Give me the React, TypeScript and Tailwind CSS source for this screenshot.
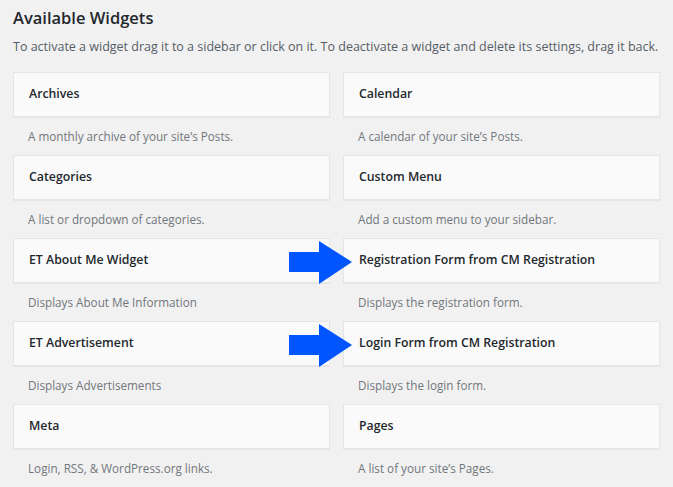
import React from "react";

type Widget = {
  title: string;
  desc: string;
  arrow?: boolean;
};

const widgets: Widget[] = [
  { title: "Archives", desc: "A monthly archive of your site’s Posts." },
  { title: "Calendar", desc: "A calendar of your site’s Posts." },
  { title: "Categories", desc: "A list or dropdown of categories." },
  { title: "Custom Menu", desc: "Add a custom menu to your sidebar." },
  { title: "ET About Me Widget", desc: "Displays About Me Information" },
  {
    title: "Registration Form from CM Registration",
    desc: "Displays the registration form.",
    arrow: true,
  },
  { title: "ET Advertisement", desc: "Displays Advertisements" },
  {
    title: "Login Form from CM Registration",
    desc: "Displays the login form.",
    arrow: true,
  },
  { title: "Meta", desc: "Login, RSS, & WordPress.org links." },
  { title: "Pages", desc: "A list of your site’s Pages." },
];

const Arrow = () => (
  <svg
    className="absolute left-[-54px] top-[3px]"
    width="64"
    height="44"
    viewBox="0 0 64 44"
  >
    <polygon points="0,11 30,11 30,0 63,21 30,43 30,31 0,31" fill="#0055ff" />
  </svg>
);

const WidgetItem = (props: Widget) => {
  return (
    <div className="relative flex flex-col">
      <div className="flex h-[45px] items-center border border-[#e5e5e5] bg-[#fafafa] px-[15px] text-[12.3px] font-semibold text-[#23282d] shadow-[0_1px_1px_rgba(0,0,0,0.04)]">
        {props.title}
      </div>
      <p className="h-[38px] px-[15px] pt-[10px] text-[11.7px] leading-[18px] text-[#72777c]">
        {props.desc}
      </p>
      {props.arrow && <Arrow />}
    </div>
  );
};

export default function App() {
  return (
    <div
      className="min-h-[487px] w-[673px] bg-[#f1f1f1] px-[13px] pt-[5px]"
      style={{ fontFamily: '"Open Sans", "Noto Sans", sans-serif' }}
    >
      <h2 className="text-[16.5px] font-semibold leading-[26px] text-[#23282d]">
        Available Widgets
      </h2>
      <p className="mt-[7px] text-[12.5px] leading-[18px] text-[#555d66]">
        To activate a widget drag it to a sidebar or click on it. To deactivate
        a widget and delete its settings, drag it back.
      </p>
      <div className="mt-[16px] grid grid-cols-2 gap-x-[13px]">
        {widgets.map((w) => (
          <WidgetItem key={w.title} {...w} />
        ))}
      </div>
    </div>
  );
}
